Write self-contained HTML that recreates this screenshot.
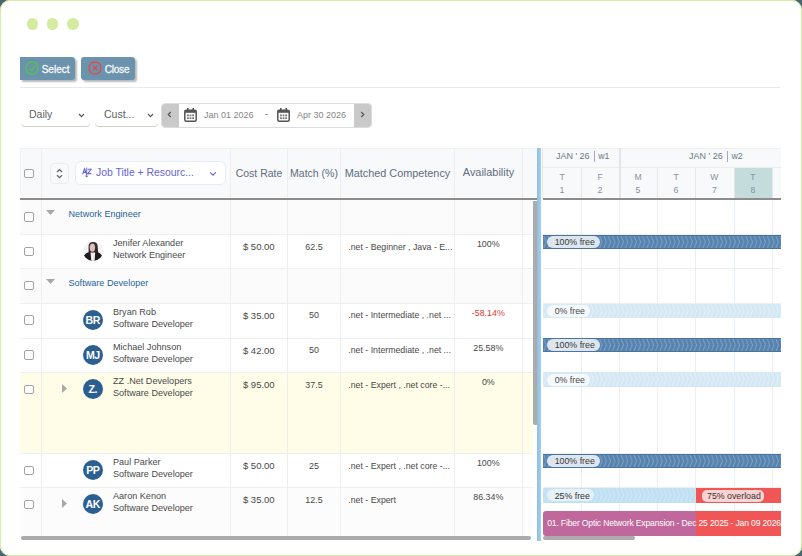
<!DOCTYPE html>
<html><head><meta charset="utf-8"><style>
*{box-sizing:border-box;margin:0;padding:0}
html,body{width:802px;height:556px;overflow:hidden;background:#4a6670;font-family:"Liberation Sans",sans-serif}
.a{position:absolute}
.t{position:absolute;white-space:nowrap;line-height:1}
#card{position:absolute;left:0;top:0;width:802px;height:556px;background:#fff;border-radius:10px;overflow:hidden}
#frame{position:absolute;left:0;top:0;width:802px;height:556px;border:1.5px solid #d6eea0;border-radius:10px;pointer-events:none}
.dot{position:absolute;width:11.5px;height:11.5px;border-radius:50%;background:#d5eb9f;top:18.3px}
.btn{position:absolute;top:57px;height:23px;background:#6b93ad;border-radius:3px;box-shadow:2px 2px 2px rgba(0,0,0,.28)}
.dd{position:absolute;top:103px;height:23px;background:#fff;border-radius:4px;box-shadow:0 1px 0.6px rgba(140,120,100,.35)}
.cb{position:absolute;width:10px;height:9.5px;border:1px solid #a2a2a2;border-radius:2px;background:#fff}
.av{position:absolute;width:20px;height:20px;border-radius:50%;background:#2b5f92;color:#fff;font-size:10.6px;font-weight:700;text-align:center;line-height:21px;white-space:nowrap;letter-spacing:-0.5px;text-indent:-0.5px}
.pill{position:absolute;white-space:nowrap;line-height:1}
</style></head><body>
<div id="card">
<div class="dot" style="left:26.6px"></div><div class="dot" style="left:46.7px"></div><div class="dot" style="left:67px"></div>
<div class="btn" style="left:20px;width:55px;border-radius:0 3px 3px 0"></div>
<svg class="a" style="left:24.6px;top:60.6px" width="14" height="14" viewBox="0 0 14 14"><circle cx="7" cy="7" r="6" fill="none" stroke="#52c452" stroke-width="1.3"/><path d="M4 7.4 L6.2 9.4 L10 5" fill="none" stroke="#52c452" stroke-width="1.3"/></svg>
<div class="t" style="left:41.70px;top:65.13px;font-size:10px;color:#f6f8fa;-webkit-text-stroke:0.3px #f6f8fa">Select</div>
<div class="btn" style="left:81px;width:54px"></div>
<svg class="a" style="left:87.7px;top:60.6px" width="14" height="14" viewBox="0 0 14 14"><circle cx="7" cy="7" r="6" fill="none" stroke="#e04a4a" stroke-width="1.3"/><path d="M5 5 L9 9 M9 5 L5 9" fill="none" stroke="#e04a4a" stroke-width="1.3"/></svg>
<div class="t" style="left:104.70px;top:65.13px;font-size:10px;color:#f6f8fa;-webkit-text-stroke:0.3px #f6f8fa;letter-spacing:-0.2px">Close</div>
<div class="a" style="left:20px;top:87px;width:760px;height:1px;background:#e3eaf3;"></div>
<div class="dd" style="left:21px;width:69px"></div>
<div class="t" style="left:29.00px;top:108.91px;font-size:10.5px;color:#606060;">Daily</div>
<svg class="a" style="left:78px;top:113px" width="7" height="5" viewBox="0 0 7 5"><path d="M1 1 L3.5 3.6 L6 1" fill="none" stroke="#555" stroke-width="1.1"/></svg>
<div class="dd" style="left:95px;width:63px"></div>
<div class="t" style="left:104.00px;top:108.91px;font-size:10.5px;color:#606060;">Cust...</div>
<svg class="a" style="left:146.5px;top:113px" width="7" height="5" viewBox="0 0 7 5"><path d="M1 1 L3.5 3.6 L6 1" fill="none" stroke="#555" stroke-width="1.1"/></svg>
<div class="a" style="left:161px;top:103px;width:211px;height:24.5px;border:1px solid #dcdcdc;border-radius:4px;background:#fff;overflow:hidden"><div class="a" style="left:0;top:0;width:17px;height:23px;background:#c9c9c9"></div><div class="a" style="right:0;top:0;width:17px;height:23px;background:#c9c9c9"></div></div>
<svg class="a" style="left:167px;top:111px" width="5" height="7" viewBox="0 0 5 7"><path d="M3.8 1 L1.2 3.5 L3.8 6" fill="none" stroke="#555" stroke-width="1.1"/></svg>
<svg class="a" style="left:360px;top:111px" width="5" height="7" viewBox="0 0 5 7"><path d="M1.2 1 L3.8 3.5 L1.2 6" fill="none" stroke="#555" stroke-width="1.1"/></svg>
<svg class="a" style="left:184px;top:108px" width="13" height="14" viewBox="0 0 13 14"><rect x="0.8" y="2.2" width="11.4" height="11" rx="1.5" fill="none" stroke="#555" stroke-width="1.5"/><rect x="0.8" y="2.2" width="11.4" height="2.6" fill="#555"/><rect x="3" y="0" width="1.6" height="3" fill="#555"/><rect x="8.4" y="0" width="1.6" height="3" fill="#555"/><g fill="#777"><rect x="3" y="6.5" width="1.8" height="1.8"/><rect x="5.6" y="6.5" width="1.8" height="1.8"/><rect x="8.2" y="6.5" width="1.8" height="1.8"/><rect x="3" y="9.3" width="1.8" height="1.8"/><rect x="5.6" y="9.3" width="1.8" height="1.8"/><rect x="8.2" y="9.3" width="1.8" height="1.8"/></g></svg>
<div class="t" style="left:204.00px;top:111.38px;font-size:9px;color:#858585;">Jan 01 2026</div>
<div class="t" style="left:265.00px;top:110.38px;font-size:9px;color:#555;">-</div>
<svg class="a" style="left:277px;top:108px" width="13" height="14" viewBox="0 0 13 14"><rect x="0.8" y="2.2" width="11.4" height="11" rx="1.5" fill="none" stroke="#555" stroke-width="1.5"/><rect x="0.8" y="2.2" width="11.4" height="2.6" fill="#555"/><rect x="3" y="0" width="1.6" height="3" fill="#555"/><rect x="8.4" y="0" width="1.6" height="3" fill="#555"/><g fill="#777"><rect x="3" y="6.5" width="1.8" height="1.8"/><rect x="5.6" y="6.5" width="1.8" height="1.8"/><rect x="8.2" y="6.5" width="1.8" height="1.8"/><rect x="3" y="9.3" width="1.8" height="1.8"/><rect x="5.6" y="9.3" width="1.8" height="1.8"/><rect x="8.2" y="9.3" width="1.8" height="1.8"/></g></svg>
<div class="t" style="left:297.00px;top:111.38px;font-size:9px;color:#858585;">Apr 30 2026</div>
<div class="a" style="left:20.5px;top:148px;width:516.5px;height:49px;background:#f8f9fb;"></div>
<div class="a" style="left:20.5px;top:148px;width:516.5px;height:1px;background:#f1efee;"></div>
<div class="a" style="left:20px;top:148px;width:1px;height:49px;background:#f3f3f3;"></div>
<div class="a" style="left:20px;top:200px;width:513px;height:34px;background:#fbfbfb;"></div>
<div class="a" style="left:20px;top:269px;width:513px;height:34px;background:#fbfbfb;"></div>
<div class="a" style="left:20px;top:373px;width:513px;height:80px;background:#fffde8;"></div>
<div class="a" style="left:20px;top:488px;width:513px;height:49px;background:#fcfcfc;"></div>
<div class="a" style="left:41px;top:148px;width:1px;height:389px;background:#eeeeee;"></div>
<div class="a" style="left:230px;top:148px;width:1px;height:389px;background:#eeeeee;"></div>
<div class="a" style="left:287px;top:148px;width:1px;height:389px;background:#eeeeee;"></div>
<div class="a" style="left:340px;top:148px;width:1px;height:389px;background:#eeeeee;"></div>
<div class="a" style="left:454px;top:148px;width:1px;height:389px;background:#eeeeee;"></div>
<div class="a" style="left:522px;top:148px;width:1px;height:389px;background:#eeeeee;"></div>
<div class="a" style="left:20px;top:234px;width:513px;height:1px;background:#efefef;"></div>
<div class="a" style="left:20px;top:268px;width:513px;height:1px;background:#efefef;"></div>
<div class="a" style="left:20px;top:303px;width:513px;height:1px;background:#efefef;"></div>
<div class="a" style="left:20px;top:338px;width:513px;height:1px;background:#efefef;"></div>
<div class="a" style="left:20px;top:372px;width:513px;height:1px;background:#efefef;"></div>
<div class="a" style="left:20px;top:453px;width:513px;height:1px;background:#efefef;"></div>
<div class="a" style="left:20px;top:487px;width:513px;height:1px;background:#efefef;"></div>
<div class="a" style="left:20px;top:198px;width:517px;height:2px;background:#8c8c8c;"></div>
<div class="cb" style="left:24px;top:168.7px"></div>
<div class="a" style="left:49.5px;top:162.5px;width:19.5px;height:21.5px;border:1px solid #e8ebef;border-radius:4px;background:#f8f9fb"></div>
<svg class="a" style="left:56px;top:168px" width="7" height="11" viewBox="0 0 7 11"><path d="M1 4 L3.5 1.6 L6 4 M1 7.2 L3.5 9.6 L6 7.2" fill="none" stroke="#5a6270" stroke-width="1.2"/></svg>
<div class="a" style="left:75px;top:161px;width:151px;height:24px;border:1px solid #e8ecf2;border-radius:6px;background:#fff"></div>
<svg class="a" style="left:81.5px;top:167px" width="10" height="11" viewBox="0 0 10 11"><path d="M0.6 7.3 L2.6 1.8 L4.6 7.3 M1.3 5.4 L3.9 5.4" fill="none" stroke="#6464dc" stroke-width="1.1"/><path d="M5.6 2.2 L9.2 2.2 L5.6 6.6 L9.3 6.6" fill="none" stroke="#6464dc" stroke-width="1.1"/><path d="M4.7 0.6 L4.7 10 M3.6 8.6 L4.7 10.2 L5.8 8.6" fill="none" stroke="#6464dc" stroke-width="0.9"/></svg>
<div class="t" style="left:96.00px;top:168.40px;font-size:10.4px;color:#6464d4;">Job Title + Resourc...</div>
<svg class="a" style="left:209px;top:170.5px" width="8" height="6" viewBox="0 0 8 6"><path d="M1.2 1.3 L4 4.1 L6.8 1.3" fill="none" stroke="#6666d6" stroke-width="1.2"/></svg>
<div class="t" style="left:231.00px;top:167.81px;width:56px;text-align:center;font-size:10.5px;color:#5e6d80;">Cost Rate</div>
<div class="t" style="left:287.50px;top:167.81px;width:53px;text-align:center;font-size:10.5px;color:#5e6d80;">Match (%)</div>
<div class="t" style="left:340.50px;top:167.52px;width:114px;text-align:center;font-size:10.85px;color:#5e6d80;">Matched Competency</div>
<div class="t" style="left:455.00px;top:167.47px;width:67px;text-align:center;font-size:10.9px;color:#5e6d80;">Availability</div>
<div class="cb" style="left:24px;top:212px"></div>
<svg class="a" style="left:46px;top:210px" width="9" height="5" viewBox="0 0 9 5"><path d="M0 0 L9 0 L4.5 5 Z" fill="#a8a8a8"/></svg>
<div class="t" style="left:68.50px;top:209.50px;font-size:9.1px;color:#26639c;">Network Engineer</div>
<div class="cb" style="left:24px;top:280.8px"></div>
<svg class="a" style="left:46px;top:278.5px" width="9" height="5" viewBox="0 0 9 5"><path d="M0 0 L9 0 L4.5 5 Z" fill="#a8a8a8"/></svg>
<div class="t" style="left:68.50px;top:279.10px;font-size:9.1px;color:#26639c;">Software Developer</div>
<div class="cb" style="left:24px;top:246.5px"></div>
<svg class="a" style="left:83px;top:240.6px" width="20" height="20" viewBox="0 0 20 20"><defs><clipPath id="avc"><circle cx="10" cy="10" r="10"/></clipPath></defs><g clip-path="url(#avc)"><rect width="20" height="20" fill="#f2f4f6"/><path d="M5.6 12 L5.6 5 Q5.9 1 10 1 Q14.4 1 14.6 5 L15.4 14 Z" fill="#33262a"/><ellipse cx="9.4" cy="6.6" rx="2.7" ry="4.2" fill="#dcc0b8"/><path d="M0 20 L0.5 16 Q2 11.5 7 11.2 L13 11.2 Q18 11.5 19.5 16 L20 20 Z" fill="#221a1e"/><path d="M7.6 11.5 L12.2 11.5 L11.6 20 L8.2 20 Z" fill="#eeeeee"/></g></svg>
<div class="t" style="left:113.00px;top:239.00px;font-size:9.1px;color:#4a4a4a;">Jenifer Alexander</div>
<div class="t" style="left:113.00px;top:251.10px;font-size:9.1px;color:#4a4a4a;">Network Engineer</div>
<div class="t" style="left:230.80px;top:242.16px;width:56px;text-align:center;font-size:9.5px;color:#484848;">$ 50.00</div>
<div class="t" style="left:287.50px;top:242.67px;width:53px;text-align:center;font-size:8.9px;color:#484848;">62.5</div>
<div class="t" style="left:348.30px;top:242.79px;font-size:8.75px;color:#484848;">.net - Beginner , Java - E...</div>
<div class="t" style="left:454.80px;top:240.47px;width:67px;text-align:center;font-size:8.9px;color:#484848;">100%</div>
<div class="cb" style="left:24px;top:315px"></div>
<div class="av" style="left:83px;top:309.5px">BR</div>
<div class="t" style="left:113.00px;top:307.50px;font-size:9.1px;color:#4a4a4a;">Bryan Rob</div>
<div class="t" style="left:113.00px;top:319.60px;font-size:9.1px;color:#4a4a4a;">Software Developer</div>
<div class="t" style="left:230.80px;top:310.66px;width:56px;text-align:center;font-size:9.5px;color:#484848;">$ 35.00</div>
<div class="t" style="left:287.50px;top:311.17px;width:53px;text-align:center;font-size:8.9px;color:#484848;">50</div>
<div class="t" style="left:348.30px;top:311.29px;font-size:8.75px;color:#484848;">.net - Intermediate , .net ...</div>
<div class="t" style="left:454.80px;top:308.97px;width:67px;text-align:center;font-size:8.9px;color:#e53935;">-58.14%</div>
<div class="cb" style="left:24px;top:350px"></div>
<div class="av" style="left:83px;top:344.5px">MJ</div>
<div class="t" style="left:113.00px;top:342.50px;font-size:9.1px;color:#4a4a4a;">Michael Johnson</div>
<div class="t" style="left:113.00px;top:354.60px;font-size:9.1px;color:#4a4a4a;">Software Developer</div>
<div class="t" style="left:230.80px;top:345.66px;width:56px;text-align:center;font-size:9.5px;color:#484848;">$ 42.00</div>
<div class="t" style="left:287.50px;top:346.17px;width:53px;text-align:center;font-size:8.9px;color:#484848;">50</div>
<div class="t" style="left:348.30px;top:346.29px;font-size:8.75px;color:#484848;">.net - Intermediate , .net ...</div>
<div class="t" style="left:454.80px;top:343.97px;width:67px;text-align:center;font-size:8.9px;color:#484848;">25.58%</div>
<div class="cb" style="left:24px;top:384.5px"></div>
<svg class="a" style="left:62px;top:384.0px" width="5" height="9" viewBox="0 0 5 9"><path d="M0 0 L5 4.5 L0 9 Z" fill="#a8a8a8"/></svg>
<div class="av" style="left:83px;top:379.0px">Z.</div>
<div class="t" style="left:113.00px;top:377.00px;font-size:9.1px;color:#4a4a4a;">ZZ .Net Developers</div>
<div class="t" style="left:113.00px;top:389.10px;font-size:9.1px;color:#4a4a4a;">Software Developer</div>
<div class="t" style="left:230.80px;top:380.16px;width:56px;text-align:center;font-size:9.5px;color:#484848;">$ 95.00</div>
<div class="t" style="left:287.50px;top:380.67px;width:53px;text-align:center;font-size:8.9px;color:#484848;">37.5</div>
<div class="t" style="left:348.30px;top:380.79px;font-size:8.75px;color:#484848;">.net - Expert , .net core -...</div>
<div class="t" style="left:454.80px;top:378.47px;width:67px;text-align:center;font-size:8.9px;color:#484848;">0%</div>
<div class="cb" style="left:24px;top:465.5px"></div>
<div class="av" style="left:83px;top:460.0px">PP</div>
<div class="t" style="left:113.00px;top:458.00px;font-size:9.1px;color:#4a4a4a;">Paul Parker</div>
<div class="t" style="left:113.00px;top:470.10px;font-size:9.1px;color:#4a4a4a;">Software Developer</div>
<div class="t" style="left:230.80px;top:461.16px;width:56px;text-align:center;font-size:9.5px;color:#484848;">$ 50.00</div>
<div class="t" style="left:287.50px;top:461.67px;width:53px;text-align:center;font-size:8.9px;color:#484848;">25</div>
<div class="t" style="left:348.30px;top:461.79px;font-size:8.75px;color:#484848;">.net - Expert , .net core -...</div>
<div class="t" style="left:454.80px;top:459.47px;width:67px;text-align:center;font-size:8.9px;color:#484848;">100%</div>
<div class="cb" style="left:24px;top:499.5px"></div>
<svg class="a" style="left:62px;top:499.0px" width="5" height="9" viewBox="0 0 5 9"><path d="M0 0 L5 4.5 L0 9 Z" fill="#a8a8a8"/></svg>
<div class="av" style="left:83px;top:494.0px">AK</div>
<div class="t" style="left:113.00px;top:492.00px;font-size:9.1px;color:#4a4a4a;">Aaron Kenon</div>
<div class="t" style="left:113.00px;top:504.10px;font-size:9.1px;color:#4a4a4a;">Software Developer</div>
<div class="t" style="left:230.80px;top:495.16px;width:56px;text-align:center;font-size:9.5px;color:#484848;">$ 35.00</div>
<div class="t" style="left:287.50px;top:495.67px;width:53px;text-align:center;font-size:8.9px;color:#484848;">12.5</div>
<div class="t" style="left:348.30px;top:495.79px;font-size:8.75px;color:#484848;">.net - Expert</div>
<div class="t" style="left:454.80px;top:493.47px;width:67px;text-align:center;font-size:8.9px;color:#484848;">86.34%</div>
<div class="a" style="left:533px;top:200.5px;width:4.5px;height:224px;background:#ababab;border-radius:0 0 2px 2px"></div>
<div class="a" style="left:21px;top:536.3px;width:510px;height:3.7px;background:#ababab;border-radius:2px"></div>
<div class="a" style="left:537.2px;top:148px;width:3.5px;height:392.5px;background:linear-gradient(to right,#8bbfe5,#a6cfec);"></div>
<div class="a" style="left:543px;top:148px;width:238px;height:49px;background:#f8f9fb;"></div>
<div class="a" style="left:543px;top:148px;width:238px;height:1px;background:#f1efee;"></div>
<div class="a" style="left:543px;top:167px;width:238px;height:1px;background:#ececec;"></div>
<div class="a" style="left:542px;top:148px;width:1px;height:51px;background:#e6e6e6;"></div>
<div class="a" style="left:734px;top:168px;width:38px;height:30px;background:#c4dcdc;"></div>
<div class="t" style="left:547.00px;top:173.02px;width:30px;text-align:center;font-size:8.6px;color:#86919f;">T</div>
<div class="t" style="left:547.00px;top:186.35px;width:30px;text-align:center;font-size:8.8px;color:#86919f;">1</div>
<div class="t" style="left:585.00px;top:173.02px;width:30px;text-align:center;font-size:8.6px;color:#86919f;">F</div>
<div class="t" style="left:585.00px;top:186.35px;width:30px;text-align:center;font-size:8.8px;color:#86919f;">2</div>
<div class="t" style="left:623.00px;top:173.02px;width:30px;text-align:center;font-size:8.6px;color:#86919f;">M</div>
<div class="t" style="left:623.00px;top:186.35px;width:30px;text-align:center;font-size:8.8px;color:#86919f;">5</div>
<div class="t" style="left:661.00px;top:173.02px;width:30px;text-align:center;font-size:8.6px;color:#86919f;">T</div>
<div class="t" style="left:661.00px;top:186.35px;width:30px;text-align:center;font-size:8.8px;color:#86919f;">6</div>
<div class="t" style="left:699.35px;top:173.02px;width:30px;text-align:center;font-size:8.6px;color:#86919f;">W</div>
<div class="t" style="left:699.35px;top:186.35px;width:30px;text-align:center;font-size:8.8px;color:#86919f;">7</div>
<div class="t" style="left:737.85px;top:173.02px;width:30px;text-align:center;font-size:8.6px;color:#86919f;">T</div>
<div class="t" style="left:737.85px;top:186.35px;width:30px;text-align:center;font-size:8.8px;color:#86919f;">8</div>
<div class="a" style="left:581px;top:168px;width:1px;height:30px;background:#e6e6e6;"></div>
<div class="a" style="left:618.7px;top:148px;width:2px;height:50px;background:#e4e4e4;"></div>
<div class="a" style="left:657px;top:168px;width:1px;height:30px;background:#e6e6e6;"></div>
<div class="a" style="left:695px;top:168px;width:1px;height:30px;background:#e6e6e6;"></div>
<div class="a" style="left:733.7px;top:168px;width:1px;height:30px;background:#e6e6e6;"></div>
<div class="a" style="left:772px;top:168px;width:1px;height:30px;background:#e6e6e6;"></div>
<div class="t" style="left:555.90px;top:152.28px;font-size:9px;color:#6b7788;">JAN ' 26</div>
<div class="a" style="left:594px;top:151px;width:1.2px;height:10.8px;background:#a3a3ee;"></div>
<div class="t" style="left:598.20px;top:152.45px;font-size:8.8px;color:#6b7788;">w1</div>
<div class="t" style="left:689.00px;top:152.28px;font-size:9px;color:#6b7788;">JAN ' 26</div>
<div class="a" style="left:727px;top:151px;width:1.2px;height:10.8px;background:#a3a3ee;"></div>
<div class="t" style="left:731.40px;top:152.45px;font-size:8.8px;color:#6b7788;">w2</div>
<div class="a" style="left:543px;top:198px;width:238px;height:2px;background:#8c8c8c;"></div>
<div class="a" style="left:580.8px;top:200px;width:1.5px;height:337px;background:#eeeef1;"></div>
<div class="a" style="left:618.8px;top:200px;width:1.5px;height:337px;background:#eeeef1;"></div>
<div class="a" style="left:656.8px;top:200px;width:1.5px;height:337px;background:#eeeef1;"></div>
<div class="a" style="left:694.8px;top:200px;width:1.5px;height:337px;background:#eeeef1;"></div>
<div class="a" style="left:733.5px;top:200px;width:1.5px;height:337px;background:#e6f0f7;"></div>
<div class="a" style="left:771.8px;top:200px;width:1.5px;height:337px;background:#eeeef1;"></div>
<div class="a" style="left:543px;top:234px;width:238px;height:1px;background:#eeeeee;"></div>
<div class="a" style="left:543px;top:268px;width:238px;height:1px;background:#eeeeee;"></div>
<div class="a" style="left:543px;top:303px;width:238px;height:1px;background:#eeeeee;"></div>
<div class="a" style="left:543px;top:338px;width:238px;height:1px;background:#eeeeee;"></div>
<div class="a" style="left:543px;top:372px;width:238px;height:1px;background:#eeeeee;"></div>
<div class="a" style="left:543px;top:453px;width:238px;height:1px;background:#eeeeee;"></div>
<div class="a" style="left:543px;top:487px;width:238px;height:1px;background:#eeeeee;"></div>
<div class="a" style="left:543px;top:235px;width:238px;height:14.3px;background:#5682ae;border-top:1px solid #4a74a0;border-bottom:1px solid #4a74a0;overflow:hidden"><svg width="238" height="14" class="a" style="left:0;top:-1px"><defs><pattern id="p7fa2c6" width="4.3" height="14" patternUnits="userSpaceOnUse"><path d="M0.3 0 L3.2 7 L0.3 14" fill="none" stroke="#7fa2c6" stroke-width="1"/></pattern></defs><rect width="238" height="14" fill="url(#p7fa2c6)"/></svg><div class="pill" style="left:4px;top:0px;width:53px;height:12px;border-radius:6px;background:#dde5ee"></div></div>
<div class="t" style="left:554.70px;top:237.85px;font-size:8.8px;color:#3a3a3a;">100% free</div>
<div class="a" style="left:543px;top:303.5px;width:238px;height:14.5px;background:#d4e8f4;overflow:hidden"><svg width="238" height="14" class="a" style="left:0;top:0"><defs><pattern id="pe2f0f8" width="4.3" height="14" patternUnits="userSpaceOnUse"><path d="M0.3 0 L3.2 7 L0.3 14" fill="none" stroke="#e2f0f8" stroke-width="1"/></pattern></defs><rect width="238" height="14" fill="url(#pe2f0f8)"/></svg><div class="pill" style="left:4px;top:1.5px;width:43px;height:12px;border-radius:6px;background:#f5f9fc"></div></div>
<div class="t" style="left:554.70px;top:307.25px;font-size:8.8px;color:#4a4a4a;">0% free</div>
<div class="a" style="left:543px;top:338.2px;width:238px;height:14.3px;background:#5682ae;border-top:1px solid #4a74a0;border-bottom:1px solid #4a74a0;overflow:hidden"><svg width="238" height="14" class="a" style="left:0;top:-1px"><defs><pattern id="p7fa2c6" width="4.3" height="14" patternUnits="userSpaceOnUse"><path d="M0.3 0 L3.2 7 L0.3 14" fill="none" stroke="#7fa2c6" stroke-width="1"/></pattern></defs><rect width="238" height="14" fill="url(#p7fa2c6)"/></svg><div class="pill" style="left:4px;top:0px;width:53px;height:12px;border-radius:6px;background:#dde5ee"></div></div>
<div class="t" style="left:554.70px;top:341.05px;font-size:8.8px;color:#3a3a3a;">100% free</div>
<div class="a" style="left:543px;top:372.3px;width:238px;height:14.5px;background:#d4e8f4;overflow:hidden"><svg width="238" height="14" class="a" style="left:0;top:0"><defs><pattern id="pe2f0f8" width="4.3" height="14" patternUnits="userSpaceOnUse"><path d="M0.3 0 L3.2 7 L0.3 14" fill="none" stroke="#e2f0f8" stroke-width="1"/></pattern></defs><rect width="238" height="14" fill="url(#pe2f0f8)"/></svg><div class="pill" style="left:4px;top:1.5px;width:43px;height:12px;border-radius:6px;background:#f5f9fc"></div></div>
<div class="t" style="left:554.70px;top:376.05px;font-size:8.8px;color:#4a4a4a;">0% free</div>
<div class="a" style="left:543px;top:454px;width:238px;height:14.3px;background:#5682ae;border-top:1px solid #4a74a0;border-bottom:1px solid #4a74a0;overflow:hidden"><svg width="238" height="14" class="a" style="left:0;top:-1px"><defs><pattern id="p7fa2c6" width="4.3" height="14" patternUnits="userSpaceOnUse"><path d="M0.3 0 L3.2 7 L0.3 14" fill="none" stroke="#7fa2c6" stroke-width="1"/></pattern></defs><rect width="238" height="14" fill="url(#p7fa2c6)"/></svg><div class="pill" style="left:4px;top:0px;width:53px;height:12px;border-radius:6px;background:#dde5ee"></div></div>
<div class="t" style="left:554.70px;top:456.85px;font-size:8.8px;color:#3a3a3a;">100% free</div>
<div class="a" style="left:543px;top:488px;width:153px;height:14.5px;background:#bfe0f2;overflow:hidden"><svg width="238" height="14" class="a" style="left:0;top:0"><defs><pattern id="pd0e8f5" width="4.3" height="14" patternUnits="userSpaceOnUse"><path d="M0.3 0 L3.2 7 L0.3 14" fill="none" stroke="#d0e8f5" stroke-width="1"/></pattern></defs><rect width="238" height="14" fill="url(#pd0e8f5)"/></svg><div class="pill" style="left:4px;top:1px;width:47px;height:12px;border-radius:6px;background:#e6f1f8"></div></div>
<div class="t" style="left:554.70px;top:491.85px;font-size:8.8px;color:#333;">25% free</div>
<div class="a" style="left:695.6px;top:488px;width:85.4px;height:14.5px;background:#f05656;"></div>
<div class="a" style="left:702px;top:490px;width:62px;height:12px;border-radius:5px;background:#fbd3d3"></div>
<div class="t" style="left:707.00px;top:491.85px;font-size:8.8px;color:#333;">75% overload</div>
<div class="a" style="left:543px;top:511px;width:238px;height:24.8px;border-radius:3px 0 0 3px;background:#c0689c;overflow:hidden"><div class="a" style="left:152.6px;top:0;width:86px;height:25px;background:#f05656"></div></div>
<div class="t" style="left:547.20px;top:519.12px;font-size:8.6px;color:#fff;letter-spacing:-0.17px">01. Fiber Optic Network Expansion - Dec 25 2025 - Jan 09 2026</div>
<div class="a" style="left:543px;top:536.3px;width:91.5px;height:3.7px;background:#ababab;border-radius:2px"></div>
</div>
<div id="frame"></div>
</body></html>
